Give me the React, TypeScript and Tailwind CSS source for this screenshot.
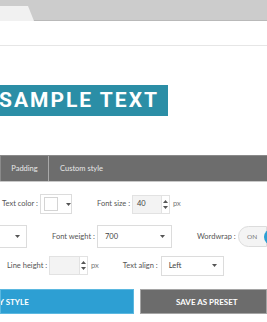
import React from "react";

const Caret = () => (
  <svg width="5" height="3" viewBox="0 0 5 3" className="shrink-0">
    <path d="M0 0 L5 0 L2.5 3 Z" fill="#555" />
  </svg>
);

const Spinner = () => (
  <div className="flex flex-col items-center justify-center gap-[3px] w-[8px] h-full border-l border-[#e2e2e2] bg-white">
    <svg width="5" height="3" viewBox="0 0 5 3"><path d="M0 3 L5 3 L2.5 0 Z" fill="#555" /></svg>
    <svg width="5" height="3" viewBox="0 0 5 3"><path d="M0 0 L5 0 L2.5 3 Z" fill="#555" /></svg>
  </div>
);

export default function App() {
  const font = { fontFamily: "Lato, 'Open Sans', sans-serif" };
  return (
    <div className="w-[267px] h-[322px] overflow-hidden bg-white relative" style={font}>
      {/* browser bar */}
      <div className="h-[21px] bg-[#cccccc] relative border-b border-[#b9b9b9]">
        <div className="absolute left-0 top-[6px] h-[15px] w-[34px] bg-[#f1f1f1]" style={{ clipPath: "polygon(0 0, 28px 0, 34px 100%, 0 100%)" }} />
      </div>
      <div className="h-[25px] border-b border-[#e6e6e6]" />

      {/* sample text */}
      <div className="mt-[39px] h-[31px] w-[168px] bg-[#2b8ea6] flex items-center overflow-hidden">
        <span className="-ml-[1px] whitespace-nowrap text-white font-bold text-[21px] tracking-[2px] leading-none" style={{ fontFamily: "Roboto, 'Open Sans', sans-serif" }}>
          SAMPLE TEXT
        </span>
      </div>

      {/* tabs */}
      <div className="mt-[39px] h-[27px] bg-[#6d6d6d] border-t border-[#8a8a8a] border-b border-b-[#c8c8c8] flex text-[7.5px] text-[#e8e8e8]">
        <div className="w-[49px] border-l border-[#8a8a8a] border-r border-r-[#a9a9a9] flex items-center justify-center">Padding</div>
        <div className="pl-[11px] flex items-center">Custom style</div>
      </div>

      {/* row 1 */}
      <div className="mt-[12px] h-[20px] flex items-center text-[7.5px] text-[#555]">
        <span className="ml-[2px] w-[38px]">Text color :</span>
        <div className="w-[32px] h-[20px] border border-[#dcdcdc] bg-white flex items-center pl-[3px] gap-[8px]">
          <div className="w-[14px] h-[14px] border border-[#d4d4d4] bg-white" />
          <Caret />
        </div>
        <span className="ml-[25px] w-[35px]">Font size :</span>
        <div className="w-[38px] h-[19px] border border-[#e2e2e2] bg-[#f3f3f3] flex items-center justify-between">
          <span className="pl-[4px] text-[#444]">40</span>
          <Spinner />
        </div>
        <span className="ml-[3px] text-[#777]">px</span>
      </div>

      {/* row 2 */}
      <div className="mt-[11px] h-[23px] flex items-center text-[7.5px] text-[#555]">
        <div className="w-[27px] h-[23px] border border-[#dcdcdc] border-l-0 bg-white flex items-center justify-end pr-[6px]">
          <Caret />
        </div>
        <span className="ml-[25px] w-[45px]">Font weight :</span>
        <div className="w-[75px] h-[23px] border border-[#dcdcdc] bg-white flex items-center justify-between pl-[7px] pr-[6px]">
          <span className="text-[#444]">700</span>
          <Caret />
        </div>
        <span className="ml-[25px] w-[41px]">Wordwrap :</span>
        <div className="h-[21px] flex-1 rounded-l-full border border-[#dcdcdc] bg-[#f4f4f4] flex items-center pl-[8px] relative">
          <span className="text-[6.5px] text-[#777]">ON</span>
          <div className="absolute left-[25px] top-[2px] w-[16px] h-[16px] rounded-full bg-[#2d9fd3]" />
        </div>
      </div>

      {/* row 3 */}
      <div className="mt-[8px] h-[19px] flex items-center text-[7.5px] text-[#555]">
        <span className="ml-[7px] w-[42px]">Line height :</span>
        <div className="w-[39px] h-[19px] border border-[#e2e2e2] bg-[#f3f3f3] flex items-center justify-end">
          <Spinner />
        </div>
        <span className="ml-[3px] text-[#777]">px</span>
        <span className="ml-[24px] w-[38px]">Text align :</span>
        <div className="w-[63px] h-[20px] border border-[#dcdcdc] bg-white flex items-center justify-between pl-[7px] pr-[6px]">
          <span className="text-[#444]">Left</span>
          <Caret />
        </div>
      </div>

      {/* buttons */}
      <div className="mt-[14px] h-[25px] flex gap-[6px] text-[8px] font-bold text-white">
        <div className="w-[134px] bg-[#2d9fd3] border border-[#5bb8e0] flex items-center overflow-hidden">
          <span className="-ml-[21px] whitespace-nowrap">APPLY STYLE</span>
        </div>
        <div className="flex-1 bg-[#6c6c6c] border border-[#a5a5a5] flex items-center pl-[35px] whitespace-nowrap">
          SAVE AS PRESET
        </div>
      </div>
    </div>
  );
}
